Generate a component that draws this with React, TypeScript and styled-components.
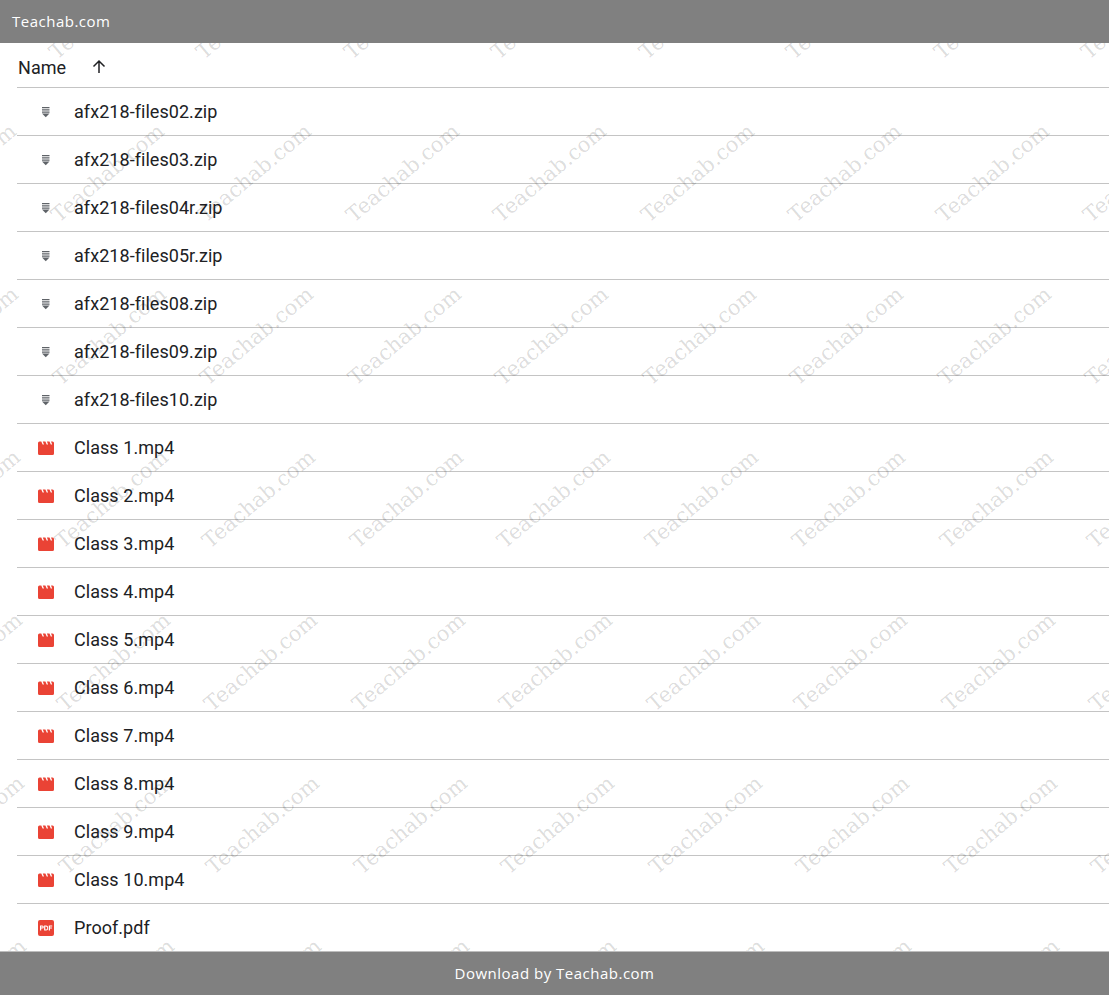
import React from "react";
import styled, { createGlobalStyle } from "styled-components";

const files = [
  { name: "afx218-files02.zip", kind: "zip" },
  { name: "afx218-files03.zip", kind: "zip" },
  { name: "afx218-files04r.zip", kind: "zip" },
  { name: "afx218-files05r.zip", kind: "zip" },
  { name: "afx218-files08.zip", kind: "zip" },
  { name: "afx218-files09.zip", kind: "zip" },
  { name: "afx218-files10.zip", kind: "zip" },
  { name: "Class 1.mp4", kind: "video" },
  { name: "Class 2.mp4", kind: "video" },
  { name: "Class 3.mp4", kind: "video" },
  { name: "Class 4.mp4", kind: "video" },
  { name: "Class 5.mp4", kind: "video" },
  { name: "Class 6.mp4", kind: "video" },
  { name: "Class 7.mp4", kind: "video" },
  { name: "Class 8.mp4", kind: "video" },
  { name: "Class 9.mp4", kind: "video" },
  { name: "Class 10.mp4", kind: "video" },
  { name: "Proof.pdf", kind: "pdf" },
];

const marks: { x: number; y: number }[] = [];
for (let row = -1; row < 7; row++) {
  for (let col = -2; col < 9; col++) {
    marks.push({ x: 59.5 + col * 147.5 + row * 2, y: 40 + row * 163 });
  }
}

const ZipIcon = () => (
  <svg width="16" height="16" viewBox="0 0 16 16">
    <path d="M4 3h7.500v1.300H4zM4 5.200h7.500v1.300H4zM4 7.400h7.500v1.300H4z" fill="#5f6368" />
    <path d="M4 9.600h7.500L7.750 13.200z" fill="#5f6368" />
  </svg>
);

const VideoIcon = () => (
  <svg width="16" height="14" viewBox="0 0 16 14">
    <path d="M1.500 0.500H3.300L4.600 3.500H6L4.800 0.500H7.400L8.700 3.500H10.100L8.900 0.500H11.500L12.800 3.500H14.200L13 0.500H14.500A1.500 1.500 0 0 1 16 2V12.500A1.500 1.500 0 0 1 14.500 14H1.500A1.500 1.500 0 0 1 0 12.500V2A1.500 1.500 0 0 1 1.500 0.500z" fill="#ea4335" />
  </svg>
);

const PdfIcon = () => (
  <svg width="16" height="16" viewBox="0 0 16 16">
    <rect width="16" height="16" rx="2" fill="#ea4335" />
    <path d="M2 5.500h2.300a1.500 1.500 0 0 1 0 3H3.200V10.500H2zM3.200 6.500v1h.9a.5.5 0 0 0 0-1zM6.100 5.500h1.900a2.100 2.100 0 0 1 2 2.500 2.100 2.100 0 0 1-2 2.500H6.100zM7.300 6.500v3h.5a1.500 1.500 0 0 0 0-3zM10.800 5.500h3.400v1h-2.200v1h1.900v1h-1.900v2h-1.200z" fill="#fff" fillRule="evenodd" />
  </svg>
);

const icons: Record<string, React.ReactNode> = {
  zip: <ZipIcon />,
  video: <VideoIcon />,
  pdf: <PdfIcon />,
};

export default function App() {
  return (
    <>
      <GlobalStyle />
      <Page>
        <TopBar>Teachab.com</TopBar>
        <List>
          <HeaderRow>
            <NameLabel>Name</NameLabel>
            <SortArrow viewBox="0 0 16 16" width="16" height="16">
              <path d="M8 2v12M2.500 7.500 8 2l5.500 5.500" fill="none" stroke="#202124" strokeWidth="1.500" />
            </SortArrow>
          </HeaderRow>
          {files.map((f) => (
            <FileRow key={f.name}>
              <IconCell>{icons[f.kind]}</IconCell>
              <FileName>{f.name}</FileName>
            </FileRow>
          ))}
        </List>
        <Watermarks>
          {marks.map((m) => (
            <Mark key={`${m.x}-${m.y}`} style={{ left: m.x, top: m.y }}>
              Teachab.com
            </Mark>
          ))}
        </Watermarks>
        <BottomBar>Download by Teachab.com</BottomBar>
      </Page>
    </>
  );
}

const GlobalStyle = createGlobalStyle`
  html, body {
    margin: 0;
    padding: 0;
    background: #fff;
    overflow: hidden;
  }
`;

const Page = styled.div`
  position: relative;
  width: 1109px;
  height: 995px;
  display: flex;
  flex-direction: column;
  overflow: hidden;
  font-family: Roboto, "Liberation Sans", sans-serif;
`;

const TopBar = styled.header`
  position: relative;
  z-index: 2;
  height: 43px;
  flex: none;
  box-sizing: border-box;
  display: flex;
  align-items: center;
  padding: 0 0 2px 12px;
  background: #808080;
  color: #fff;
  font-family: "Open Sans", sans-serif;
  font-size: 15px;
  letter-spacing: 0.5px;
`;

const List = styled.main`
  flex: 1;
  min-height: 0;
  padding-left: 17px;
  overflow: hidden;
`;

const HeaderRow = styled.div`
  height: 40px;
  display: flex;
  align-items: center;
  border-bottom: 1px solid #c4c4c4;
  padding: 4px 0 0 1px;
`;

const NameLabel = styled.span`
  font-size: 18px;
  letter-spacing: 0.05px;
  color: #202124;
`;

const SortArrow = styled.svg`
  margin-left: 25px;
`;

const FileRow = styled.div`
  height: 47px;
  display: flex;
  align-items: center;
  border-bottom: 1px solid #c4c4c4;
`;

const IconCell = styled.div`
  width: 57px;
  flex: none;
  display: flex;
  justify-content: flex-start;
  padding-left: 21px;
  box-sizing: border-box;
`;

const FileName = styled.span`
  font-size: 18px;
  letter-spacing: 0.05px;
  color: #202124;
`;

const Watermarks = styled.div`
  position: absolute;
  inset: 0;
  z-index: 1;
  overflow: hidden;
  pointer-events: none;
`;

const Mark = styled.span`
  position: absolute;
  font-family: "DejaVu Serif", serif;
  font-size: 21px;
  line-height: 24px;
  white-space: nowrap;
  color: rgba(0, 0, 0, 0.15);
  transform: rotate(-40deg);
  transform-origin: 0 100%;
`;

const BottomBar = styled.footer`
  position: relative;
  z-index: 2;
  height: 44px;
  flex: none;
  box-sizing: border-box;
  display: flex;
  align-items: center;
  justify-content: center;
  padding-bottom: 2px;
  background: #808080;
  color: #fff;
  border-top: 1px solid #bdbdbd;
  font-family: "Open Sans", sans-serif;
  font-size: 15px;
  letter-spacing: 0.5px;
`;
